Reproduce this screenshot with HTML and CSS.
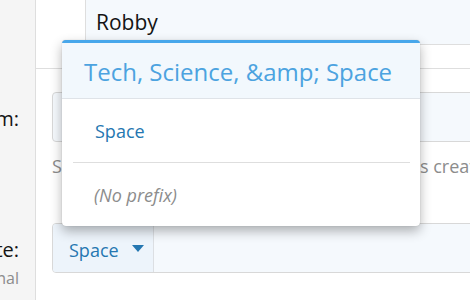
FILE: index.html
```html
<!DOCTYPE html>
<html>
<head>
<meta charset="utf-8">
<link rel="stylesheet" href="styles.css">
</head>
<body>
<div class="form">
  <div class="label-cell"></div>
  <div class="content-cell top-row">
    <div class="top-gap"></div>
    <div class="name-box">Robby</div>
  </div>

  <div class="label-cell label-forum">
    <span class="label">Forum:</span>
  </div>
  <div class="content-cell forum-row">
    <div class="input"></div>
    <div class="hint">Select the forum in which the thread prefix is created by default.</div>
  </div>

  <div class="label-cell label-template">
    <span class="label">Template:</span>
    <span class="label-hint">Optional</span>
  </div>
  <div class="content-cell template-row">
    <div class="input split">
      <div class="prefix-btn"><span>Space</span><span class="caret"></span></div>
      <div class="input-rest"></div>
    </div>
  </div>
</div>

<div class="menu">
  <div class="menu-header">Tech, Science, &amp;amp; Space</div>
  <div class="menu-item">Space</div>
  <div class="menu-sep"></div>
  <div class="menu-item none">(No prefix)</div>
</div>
</body>
</html>
```

FILE: styles.css
```css
html, body {
  margin: 0;
  padding: 0;
  overflow: hidden;
  background: #fff;
}

body {
  font-family: "Open Sans", "Noto Sans", sans-serif;
  color: #141414;
  width: 470px;
  height: 300px;
  position: relative;
}

.form {
  display: grid;
  grid-template-columns: 36px 1fr;
  grid-template-rows: auto auto 1fr;
  min-height: 300px;
}

.label-cell {
  background: #f5f5f5;
  border-right: 1px solid #dedede;
  display: flex;
  flex-direction: column;
  align-items: flex-end;
  overflow: hidden;
  padding-right: 16px;
  min-width: 0;
}

.label {
  font-size: 20px;
  line-height: 28px;
  white-space: nowrap;
}

.label-hint {
  font-size: 16px;
  line-height: 22px;
  color: #8c8c8c;
  white-space: nowrap;
  margin-top: 3px;
}

.label-forum { padding-top: 36px; }
.label-template { padding-top: 58px; }

.content-cell {
  min-width: 0;
}

.top-row {
  display: flex;
  height: 68px;
  border-bottom: 1px solid #dedede;
}

.top-gap {
  width: 49px;
  flex: none;
}

.name-box {
  flex: 1;
  height: 44px;
  line-height: 44px;
  background: #f5f9fd;
  border-left: 1px solid #dedede;
  border-bottom: 1px solid #dedede;
  padding-left: 10px;
  font-size: 21px;
}

.forum-row {
  padding: 23px 0 0 16px;
}

.input {
  height: 48px;
  background: #f5f9fd;
  border: 1px solid #d8d8d8;
  border-radius: 4px;
  margin-right: -10px;
}

.hint {
  margin-top: 12px;
  font-size: 18px;
  line-height: 24px;
  color: #8c8c8c;
  white-space: nowrap;
}

.template-row {
  padding: 45px 0 0 16px;
}

.split {
  display: flex;
  overflow: hidden;
}

.prefix-btn {
  width: 101px;
  background: #edf4fb;
  border-right: 1px solid #dcdfe3;
  display: flex;
  align-items: center;
  padding: 3px 0 0 16px;
  box-sizing: border-box;
  color: #2577b1;
  font-size: 18px;
}

.caret {
  width: 0;
  height: 0;
  border-left: 6.5px solid transparent;
  border-right: 6.5px solid transparent;
  border-top: 7px solid #2577b1;
  margin-left: 13px;
  margin-top: -3px;
}

.input-rest {
  flex: 1;
}

.menu {
  position: absolute;
  left: 62px;
  top: 40px;
  width: 358px;
  background: #fff;
  border-top: 3px solid #47a7eb;
  border-radius: 4px;
  box-shadow: 0 5px 12px rgba(0, 0, 0, 0.3), 0 0 1px rgba(0, 0, 0, 0.25);
  z-index: 10;
}

.menu-header {
  height: 53px;
  line-height: 53px;
  padding: 2px 0 0 22px;
  background: #f2f8fd;
  border-bottom: 1px solid #dfe3e8;
  color: #4ca3e0;
  font-size: 24px;
  white-space: nowrap;
}

.menu-item {
  padding: 20px 0 19px 33px;
  font-size: 18px;
  line-height: 24px;
  color: #2577b1;
}

.menu-item.none {
  font-style: italic;
  color: #8c8c8c;
  padding-left: 32px;
}

.menu-sep {
  height: 1px;
  margin: 0 10px 0 11px;
  background: #dedede;
}
```
